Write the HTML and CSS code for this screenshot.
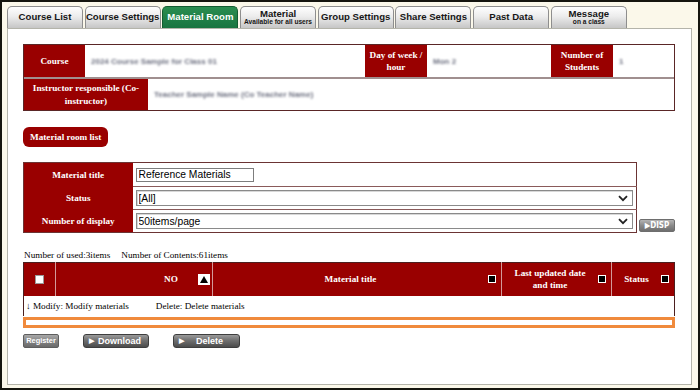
FILE: index.html
```html
<!DOCTYPE html>
<html lang="en">
<head>
  <meta charset="UTF-8">
  <title>Material Room</title>
  <link rel="stylesheet" href="styles.css">
</head>
<body>

<div class="frame">
  <ul class="tabs">
    <li class="tab">Course List</li>
    <li class="tab">Course Settings</li>
    <li class="tab active">Material Room</li>
    <li class="tab">Material<small>Available for all users</small></li>
    <li class="tab">Group Settings</li>
    <li class="tab">Share Settings</li>
    <li class="tab">Past Data</li>
    <li class="tab">Message<small>on a class</small></li>
  </ul>

  <div class="panel">
    <div class="info">
      <div class="info-row first">
        <div class="info-head">Course</div>
        <div class="info-val"><span class="blur">2024 Course Sample for Class 01</span></div>
        <div class="info-head">Day of week /<br>hour</div>
        <div class="info-val"><span class="blur">Mon 2</span></div>
        <div class="info-head">Number of<br>Students</div>
        <div class="info-val"><span class="blur">1</span></div>
      </div>
      <div class="info-row second">
        <div class="info-head">Instructor responsible (Co-<br>instructor)</div>
        <div class="info-val"><span class="blur">Teacher Sample Name (Co Teacher Name)</span></div>
      </div>
    </div>

    <div class="section-label">Material room list</div>

    <div class="search-wrap">
      <table class="search">
        <tr>
          <th>Material title</th>
          <td><input type="text" class="title-input" value="Reference Materials"></td>
        </tr>
        <tr>
          <th>Status</th>
          <td>
            <div class="select-box">
              <select><option>[All]</option></select>
              <svg class="chev" width="10" height="7" viewBox="0 0 10 7"><path d="M1 1.2 L5 5.2 L9 1.2" fill="none" stroke="#222" stroke-width="1.8"/></svg>
            </div>
          </td>
        </tr>
        <tr>
          <th>Number of display</th>
          <td>
            <div class="select-box">
              <select><option>50items/page</option></select>
              <svg class="chev" width="10" height="7" viewBox="0 0 10 7"><path d="M1 1.2 L5 5.2 L9 1.2" fill="none" stroke="#222" stroke-width="1.8"/></svg>
            </div>
          </td>
        </tr>
      </table>
      <button class="disp-btn" type="button">&#9654;DISP</button>
    </div>

    <p class="counts"><span>Number of used:3items</span><span>Number of Contents:61items</span></p>

    <table class="list">
      <tr class="list-head">
        <th class="col-check"><span class="check"></span></th>
        <th class="col-no"><div class="head-cell"><span class="label no-label">NO</span><span class="sort-up"></span></div></th>
        <th class="col-title"><div class="head-cell"><span class="label">Material title</span><span class="sort"></span></div></th>
        <th class="col-date"><div class="head-cell"><span class="label">Last updated date<br>and time</span><span class="sort"></span></div></th>
        <th class="col-status"><div class="head-cell"><span class="label">Status</span><span class="sort"></span></div></th>
      </tr>
      <tr class="legend">
        <td colspan="5"><span>&#8595; Modify: Modify materials</span><span>Delete: Delete materials</span></td>
      </tr>
    </table>
    <div class="highlight-row"></div>

    <div class="actions">
      <button class="btn-register" type="button">Register</button>
      <button class="btn-dark" type="button"><span class="arrow">&#9654;</span>Download</button>
      <button class="btn-dark delete" type="button"><span class="arrow">&#9654;</span>Delete</button>
    </div>
  </div>
</div>

</body>
</html>
```

FILE: styles.css
```css
* {
  box-sizing: border-box;
}

body {
  margin: 0;
  font-family: "Liberation Serif", "Times New Roman", serif;
  font-size: 9.2px;
  color: #000;
}

.frame {
  width: 700px;
  height: 390px;
  border: 2px solid #15150e;
  background: #fbf8ea;
  padding: 4px 6px 3px 5px;
  display: flex;
  flex-direction: column;
}

/* tabs */
.tabs {
  list-style: none;
  margin: 0;
  padding: 0;
  display: flex;
  gap: 1.7px;
  height: 22px;
}

.tab {
  width: 76px;
  border: 1px solid #8e8e8e;
  border-bottom: none;
  border-radius: 5px 5px 0 0;
  background: linear-gradient(#fefefe, #ececec 45%, #c6c6c6);
  font: bold 9.6px "Liberation Sans", Arial, sans-serif;
  color: #161616;
  display: flex;
  flex-direction: column;
  align-items: center;
  justify-content: center;
  line-height: 1.05;
  white-space: nowrap;
}

.tab small {
  font-size: 6.6px;
  font-weight: bold;
}

.tab.active {
  background: linear-gradient(#2a8d50, #197440);
  border-color: #125c30;
  color: #fff;
}

.panel {
  flex: 1;
  background: #fff;
  border: 1px solid #b4b4aa;
  padding: 15px 16px 0 15px;
}

/* course info */
.info {
  width: 652px;
  border: 1px solid #5a2626;
}

.info-row {
  display: grid;
}

.info-row.first {
  grid-template-columns: 61px 280px 62px 124px 62px 1fr;
  height: 32px;
}

.info-row.second {
  grid-template-columns: 124px 1fr;
  height: 33px;
  border-top: 2px solid #a08f8f;
}

.info-head {
  background: #990000;
  color: #fff;
  font-weight: bold;
  display: flex;
  align-items: center;
  justify-content: center;
  text-align: center;
  line-height: 1.35;
}

.info-val {
  display: flex;
  align-items: center;
  padding-left: 6px;
}

.blur {
  font-family: "Liberation Sans", Arial, sans-serif;
  font-size: 8px;
  font-weight: bold;
  color: #6d7080;
  filter: blur(0.9px);
}

.section-label {
  display: inline-flex;
  align-items: center;
  margin-top: 16px;
  height: 20px;
  padding: 0 7px;
  background: #990000;
  border-radius: 6px;
  color: #fff;
  font-weight: bold;
}

/* search */
.search-wrap {
  margin-top: 15px;
  display: flex;
  align-items: flex-end;
  gap: 2px;
}

.search {
  width: 614px;
  border-collapse: collapse;
  border: 1px solid #6b3434;
}

.search th {
  width: 109px;
  background: #990000;
  color: #fff;
  font-weight: bold;
  text-align: center;
  padding: 0;
}

.search td {
  padding: 0 3px;
  border-top: 1px solid #8a5a5a;
}

.search tr:first-child td {
  border-top: none;
}

.search tr:first-child {
  height: 24px;
}

.search tr {
  height: 23px;
}

.title-input {
  width: 118px;
  height: 14px;
  margin: 0;
  padding: 0 2px;
  border: 1px solid #7d7d7d;
  font: 10.3px "Liberation Sans", Arial, sans-serif;
  color: #000;
  display: block;
}

.select-box {
  position: relative;
  width: 497px;
}

.select-box select {
  appearance: none;
  width: 100%;
  height: 16px;
  margin: 0;
  padding: 0 2px;
  border: 1px solid #8a8a8a;
  box-shadow: inset 1px 1px 0 #d8d8d8;
  background: #fff;
  font: 10.3px "Liberation Sans", Arial, sans-serif;
  color: #000;
  display: block;
}

.chev {
  position: absolute;
  right: 5px;
  top: 5px;
}

.disp-btn {
  width: 36px;
  height: 13px;
  margin: 0 0 1px 0;
  padding: 0;
  border: 1px solid #6e6e6e;
  border-radius: 2px;
  background: linear-gradient(#b4b4b4, #8a8a8a 50%, #6e6e6e);
  color: #fff;
  font: bold 8px "DejaVu Sans Condensed", "Liberation Sans", sans-serif;
}

/* list */
.counts {
  margin: 16px 0 1px 1px;
  height: 12px;
  line-height: 12px;
  display: flex;
  gap: 11px;
}

.list {
  width: 652px;
  border-collapse: collapse;
  border: 1px solid #4b1f1f;
  border-bottom: none;
}

.list-head {
  height: 33px;
}

.list-head th {
  background: #990000;
  color: #fff;
  font-weight: bold;
  padding: 0;
  border-left: 1px solid #d39a9a;
  line-height: 1.35;
}

.list-head th:first-child {
  border-left: none;
}

.col-check {
  width: 32px;
}

.col-no {
  width: 157px;
}

.col-date {
  width: 110px;
}

.col-status {
  width: 63px;
}

.check {
  display: block;
  width: 9px;
  height: 9px;
  margin: 0 auto;
  background: #fff;
  border: 1px solid #9a9a9a;
}

.head-cell {
  display: flex;
  align-items: center;
}

.head-cell .label {
  flex: 1;
  text-align: center;
}

.no-label {
  padding-left: 88px;
}

.sort {
  width: 8px;
  height: 8px;
  margin-right: 5px;
  background: #000;
  border: 1px solid #fff;
}

.sort-up {
  position: relative;
  width: 12px;
  height: 11px;
  margin-right: 2px;
  background: #fff;
}

.sort-up::after {
  content: "";
  position: absolute;
  left: 2px;
  top: 2px;
  border-left: 4px solid transparent;
  border-right: 4px solid transparent;
  border-bottom: 7px solid #000;
}

.legend td {
  height: 20px;
  padding: 0 2px;
  border-left: 1px solid #4b1f1f;
  border-right: 1px solid #4b1f1f;
}

.legend span + span {
  margin-left: 27px;
}

.highlight-row {
  width: 652px;
  height: 11px;
  border: 3px solid #f08a3c;
  margin-top: 1px;
}

.actions {
  margin-top: 6px;
  display: flex;
  gap: 24px;
}

.actions button {
  font-family: "Liberation Sans", Arial, sans-serif;
  font-weight: bold;
  color: #fff;
  padding: 0;
}

.btn-register {
  width: 36px;
  height: 14px;
  border: 1px solid #5e5e5e;
  border-radius: 2px;
  background: linear-gradient(#a8a8a8, #858585 50%, #6a6a6a);
  font-size: 7.4px;
}

.btn-dark {
  width: 66px;
  height: 14px;
  border: 1px solid #3e3e3e;
  border-radius: 3px;
  background: linear-gradient(#9a9a9a, #707070 45%, #4c4c4c);
  font-size: 9px;
  display: flex;
  align-items: center;
  padding-left: 5px !important;
}

.btn-dark .arrow {
  font-size: 6.5px;
  margin-right: 4px;
}

.btn-dark.delete {
  width: 67px;
}

.btn-dark.delete .arrow {
  margin-right: 12px;
}
```
